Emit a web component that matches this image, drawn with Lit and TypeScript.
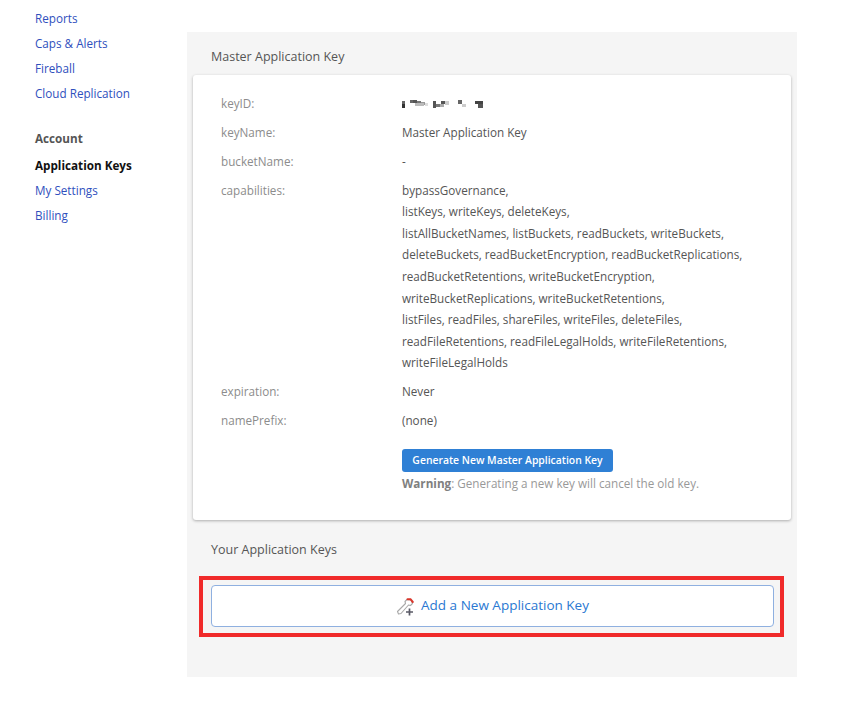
import { LitElement, html, css, svg } from "lit";
import { customElement } from "lit/decorators.js";

const capabilities = [
  "bypassGovernance,",
  "listKeys, writeKeys, deleteKeys,",
  "listAllBucketNames, listBuckets, readBuckets, writeBuckets,",
  "deleteBuckets, readBucketEncryption, readBucketReplications,",
  "readBucketRetentions, writeBucketEncryption,",
  "writeBucketReplications, writeBucketRetentions,",
  "listFiles, readFiles, shareFiles, writeFiles, deleteFiles,",
  "readFileRetentions, readFileLegalHolds, writeFileRetentions,",
  "writeFileLegalHolds",
];

// mosaic blocks that stand for the redacted key: x, y, w, h, grey level
const blur: [number, number, number, number, string][] = [
  [0, 1, 3, 3, "#666"], [0, 4, 3, 4, "#333"],
  [8, 0, 3, 3, "#666"], [11, 0, 4, 3, "#555"], [15, 1, 4, 3, "#777"], [19, 2, 4, 3, "#999"], [13, 3, 9, 3, "#bbb"], [23, 3, 3, 3, "#ddd"],
  [31, 1, 3, 7, "#555"], [34, 4, 4, 3, "#777"], [39, 1, 4, 3, "#555"], [38, 4, 4, 3, "#aaa"], [43, 1, 4, 4, "#ccc"],
  [56, 0, 4, 4, "#666"], [60, 4, 4, 3, "#ccc"],
  [73, 1, 8, 3, "#444"], [76, 4, 5, 4, "#555"],
];

@customElement("app-root")
export class AppRoot extends LitElement {
  static styles = css`
    :host {
      display: block;
      width: 845px;
      height: 701px;
      overflow: hidden;
      background: #fff;
      font-family: "Open Sans", "Liberation Sans", sans-serif;
      font-size: 11.7px;
      line-height: 21.6px;
      color: #555;
    }
    .page { display: flex; align-items: flex-start; }
    .side {
      width: 187px;
      flex: none;
      box-sizing: border-box;
      padding: 8px 0 0 35px;
      display: flex;
      flex-direction: column;
      gap: 5px;
      line-height: 20px;
    }
    .side a { color: #2f4fbd; text-decoration: none; }
    .side .head { font-weight: 700; color: #555; margin-top: 20px; line-height: 20px; }
    .side .cur { font-weight: 700; color: #111; margin-top: 2px; }
    .main {
      position: relative;
      width: 610px;
      height: 645px;
      margin-top: 32px;
      box-sizing: border-box;
      padding: 15px 6px 0;
      background: #f5f5f5;
    }
    h2 {
      margin: 0;
      font-size: 12.5px;
      font-weight: 400;
      line-height: 20px;
      color: #555;
      padding-left: 18px;
    }
    .card {
      margin-top: 8px;
      height: 445px;
      box-sizing: border-box;
      padding: 18px 28px 0;
      background: #fff;
      border-radius: 3px;
      box-shadow: 0 1px 3px rgba(0,0,0,.3);
    }
    .rows {
      display: grid;
      grid-template-columns: 181px 1fr;
      row-gap: 7.3px;
    }
    .k { color: #8c8c8c; }
    .v { color: #555; }
    .v div { white-space: nowrap; }
    .btnrow { grid-column: 2; margin-top: 10px; }
    .btn {
      display: block;
      box-sizing: border-box;
      width: 211px;
      height: 23px;
      padding: 0;
      border: none;
      border-radius: 3px;
      background: #2f80d5;
      color: #fff;
      font: 600 10.4px/23px "Open Sans", "Liberation Sans", sans-serif;
      text-align: center;
    }
    .warn { color: #999; line-height: 21px; margin-top: 1px; }
    .warn b { color: #808080; }
    .second { margin-top: 20px; }
    .add {
      margin: 25px 17px 0 18px;
      height: 42px;
      box-sizing: border-box;
      border: 1px solid #8fb0e0;
      border-radius: 4px;
      background: #fff;
      display: flex;
      align-items: center;
      justify-content: center;
      gap: 5px;
      color: #2a78d2;
      font-size: 13.5px;
    }
    .add svg { display: block; }
    .mark {
      position: absolute;
      left: 12px;
      top: 544px;
      width: 585px;
      height: 61px;
      box-sizing: border-box;
      border: 4px solid #f02a2a;
      pointer-events: none;
    }
    .mosaic { display: block; margin-top: 7px; filter: blur(.5px); }
  `;

  render() {
    return html`
      <div class="page">
        <nav class="side">
          <a>Reports</a>
          <a>Caps &amp; Alerts</a>
          <a>Fireball</a>
          <a>Cloud Replication</a>
          <div class="head">Account</div>
          <a class="cur">Application Keys</a>
          <a>My Settings</a>
          <a>Billing</a>
        </nav>
        <main class="main">
          <h2>Master Application Key</h2>
          <section class="card">
            <div class="rows">
              <div class="k">keyID:</div>
              <div class="v">
                <svg class="mosaic" width="82" height="8" viewBox="0 0 82 8">
                  ${blur.map(([x, y, w, h, c]) => svg`<rect x=${x} y=${y} width=${w} height=${h} fill=${c}></rect>`)}
                </svg>
              </div>
              <div class="k">keyName:</div>
              <div class="v">Master Application Key</div>
              <div class="k">bucketName:</div>
              <div class="v">-</div>
              <div class="k">capabilities:</div>
              <div class="v">${capabilities.map((l) => html`<div>${l}</div>`)}</div>
              <div class="k">expiration:</div>
              <div class="v">Never</div>
              <div class="k">namePrefix:</div>
              <div class="v">(none)</div>
              <div class="btnrow">
                <button class="btn">Generate New Master Application Key</button>
                <div class="warn"><b>Warning</b>: Generating a new key will cancel the old key.</div>
              </div>
            </div>
          </section>
          <h2 class="second">Your Application Keys</h2>
          <div class="add">
            <svg width="20" height="20" viewBox="0 0 20 20" fill="none">
              <path d="M1.5 15.5 9.5 7.5 9 5.5 11 3.5 15 4 16.5 7.5 14.5 9.5 12.5 9 5 17.5 2.5 18Z" fill="#fff" stroke="#a9a9a9" stroke-width="1.1" stroke-linejoin="round"/>
              <path d="M11.5 3.2 14.5 3.2 16.8 6" stroke="#d9362b" stroke-width="2" stroke-linecap="round"/>
              <path d="M13.5 12.5v7M10 16h7" stroke="#5a5a66" stroke-width="1.7"/>
            </svg>
            <span>Add a New Application Key</span>
          </div>
          <div class="mark"></div>
        </main>
      </div>
    `;
  }
}
